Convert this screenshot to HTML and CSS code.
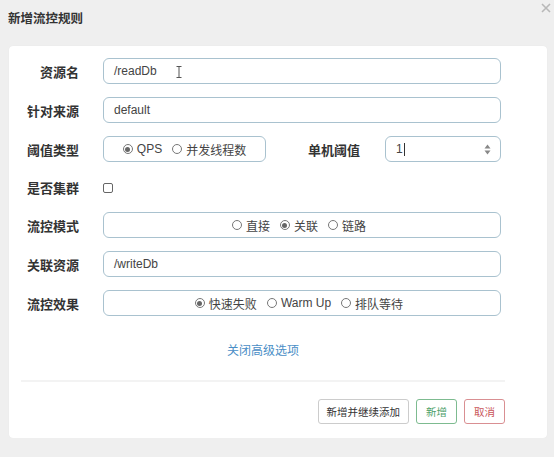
FILE: index.html
```html
<!DOCTYPE html>
<html lang="zh-CN">
<head>
    <meta charset="UTF-8">
    <title>新增流控规则</title>
    <link rel="stylesheet" href="styles.css">
</head>
<body>
    <div class="dialog-head">
        <h3 class="dialog-title">新增流控规则</h3>
        <svg class="close" width="10" height="10" viewBox="0 0 10 10"><path d="M1 1L9 9M9 1L1 9" stroke="#b8b8b8" stroke-width="1.6"/></svg>
    </div>

    <div class="dialog-card">
        <div class="form-row">
            <label class="form-label">资源名</label>
            <div class="field text-field">
                /readDb
                <svg class="ibeam" width="6" height="12" viewBox="0 0 6 12"><path d="M0.5 0.5h5M3 0.5v11M0.5 11.5h5" stroke="#555" stroke-width="1" fill="none"/></svg>
            </div>
        </div>
        <div class="form-row">
            <label class="form-label">针对来源</label>
            <div class="field text-field">default</div>
        </div>
        <div class="form-row">
            <label class="form-label">阈值类型</label>
            <div class="field radio-field grade-box">
                <span class="radio checked"></span>QPS
                <span class="radio"></span>并发线程数
            </div>
            <label class="form-label count-label">单机阈值</label>
            <div class="field number-field">
                <span class="num">1<i class="caret"></i></span>
                <svg class="spin" width="7" height="11" viewBox="0 0 7 11"><path d="M3.5 0.5L6.5 4.5H0.5Z M3.5 10.5L6.5 6.5H0.5Z" fill="#888"/></svg>
            </div>
        </div>
        <div class="form-row short-row">
            <label class="form-label">是否集群</label>
            <span class="checkbox"></span>
        </div>
        <div class="form-row">
            <label class="form-label">流控模式</label>
            <div class="field radio-field">
                <span class="radio"></span>直接
                <span class="radio checked"></span>关联
                <span class="radio"></span>链路
            </div>
        </div>
        <div class="form-row">
            <label class="form-label">关联资源</label>
            <div class="field text-field">/writeDb</div>
        </div>
        <div class="form-row">
            <label class="form-label">流控效果</label>
            <div class="field radio-field">
                <span class="radio checked"></span>快速失败
                <span class="radio"></span>Warm Up
                <span class="radio"></span>排队等待
            </div>
        </div>

        <div class="toggle-link"><a href="#">关闭高级选项</a></div>

        <div class="dialog-foot">
            <button class="btn">新增并继续添加</button>
            <button class="btn btn-ok">新增</button>
            <button class="btn btn-cancel">取消</button>
        </div>
    </div>
</body>
</html>
```

FILE: styles.css
```css
/* 公共样式 */
body {
    margin: 0;
    background: #efefef;
    font-family: "Liberation Sans", "Noto Sans CJK SC", sans-serif;
    color: #333;
}

.dialog-head {
    position: relative;
    height: 46px;
}

.dialog-title {
    margin: 0;
    padding: 11px 0 0 8px;
    font-size: 12.5px;
    line-height: 17px;
    font-weight: bold;
    color: #333;
}

.close {
    position: absolute;
    top: 3px;
    right: 3px;
}

/* 卡片 */
.dialog-card {
    margin: 0 7px 0 9px;
    padding: 12px 0 14px 0;
    background: #fff;
    border-radius: 4px;
    box-shadow: 0 0 1px rgba(0,0,0,0.08);
}

.form-row {
    display: flex;
    align-items: center;
    height: 26px;
    margin-bottom: 13px;
    padding-right: 46px;
}

.short-row {
    height: 25px;
    margin-bottom: 12px;
}

.form-label {
    width: 70px;
    margin-right: 24px;
    flex-shrink: 0;
    text-align: right;
    font-size: 13px;
    font-weight: bold;
    color: #333;
}

.field {
    position: relative;
    box-sizing: border-box;
    height: 26px;
    border: 1px solid #a9c2cf;
    border-radius: 6px;
    font-size: 12px;
    color: #444;
    display: flex;
    align-items: center;
}

.text-field {
    flex: 1;
    padding-left: 10px;
}

.ibeam {
    position: absolute;
    left: 72px;
    top: 7px;
}

.radio-field {
    flex: 1;
    justify-content: center;
    padding-right: 6px;
}

.grade-box {
    flex: 0 0 163px;
    padding-right: 0;
}

.count-label {
    margin-left: auto;
    margin-right: 25px;
}

.number-field {
    width: 116px;
    flex-shrink: 0;
    padding: 0 9px 0 10px;
    justify-content: space-between;
}

.num {
    display: flex;
    align-items: center;
}

.caret {
    display: inline-block;
    width: 1px;
    height: 13px;
    background: #333;
    margin-left: 1px;
}

.radio {
    display: inline-block;
    box-sizing: border-box;
    width: 10px;
    height: 10px;
    margin: 0 4px 0 10px;
    border: 1px solid #777;
    border-radius: 50%;
    position: relative;
}

.radio:first-child {
    margin-left: 0;
}

.radio.checked::after {
    content: "";
    position: absolute;
    left: 1.5px;
    top: 1.5px;
    width: 5px;
    height: 5px;
    border-radius: 50%;
    background: #666;
}

.checkbox {
    box-sizing: border-box;
    width: 10px;
    height: 10px;
    border: 1px solid #666;
    border-radius: 2px;
}

.toggle-link {
    margin-top: 26px;
    padding-right: 30px;
    text-align: center;
    font-size: 12px;
    line-height: 18px;
}

.toggle-link a {
    color: #4a8ec6;
    text-decoration: none;
}

/* 底部按钮 */
.dialog-foot {
    display: flex;
    justify-content: flex-end;
    gap: 7px;
    margin: 20px 42px 0 12px;
    padding-top: 17px;
    border-top: 2px solid #f3f3f3;
}

.btn {
    height: 25px;
    padding: 0 8px;
    font-family: "Liberation Sans", "Noto Sans CJK SC", sans-serif;
    font-size: 10.5px;
    color: #333;
    background: #fff;
    border: 1px solid #ccc;
    border-radius: 3px;
}

.btn-ok {
    color: #4f9f6a;
    border-color: #7dbb90;
    padding: 0 9px;
}

.btn-cancel {
    color: #c9555a;
    border-color: #d98f92;
    padding: 0 9px;
}
```
